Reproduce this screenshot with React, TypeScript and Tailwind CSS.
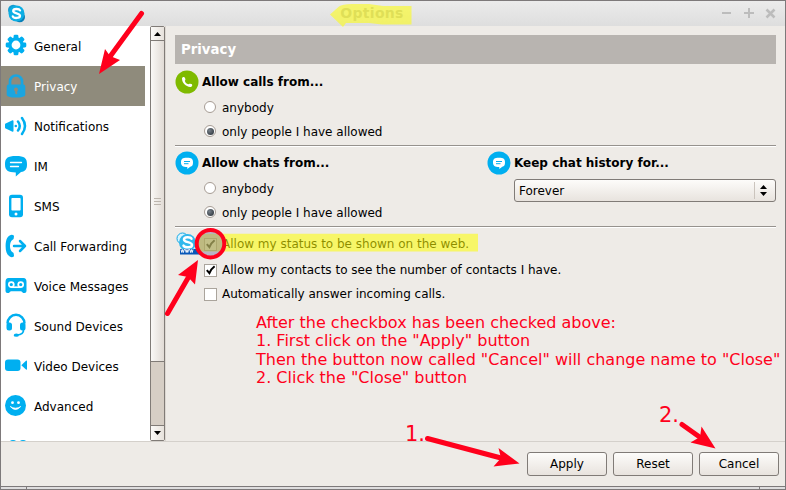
import type { ReactNode } from "react";

const BLUE = "#00aff0";

function GearIcon() {
  return (
    <svg width="22" height="22" viewBox="0 0 22 22">
      <g fill={BLUE}>
        {[0, 45, 90, 135].map((a) => (
          <rect key={a} x="8.6" y="0.7" width="4.8" height="20.6" rx="1.4" transform={`rotate(${a} 11 11)`} />
        ))}
        <circle cx="11" cy="11" r="7.800" />
      </g>
      <circle cx="11" cy="11" r="4.400" fill="#fff" />
    </svg>
  );
}
function LockIcon() {
  return (
    <svg width="22" height="24" viewBox="0 0 22 24">
      <path d="M5 11V7.5a6 6 0 0 1 12 0V11" fill="none" stroke="#1ba5e0" strokeWidth="2.700" />
      <path d="M3.500 10.500h15q1.800 0 1.800 2v8.200q0 2.800-9.300 2.800t-9.300-2.800v-8.200q0-2 1.800-2z" fill="#1ba5e0" />
      <circle cx="11" cy="15.500" r="2" fill="#8f8b7c" />
      <path d="M10.200 16h2v4.500l-2-.7z" fill="#8f8b7c" />
    </svg>
  );
}
function SpeakerIcon() {
  return (
    <svg width="24" height="20" viewBox="0 0 24 20">
      <path d="M1.700 7.400 8.500 4.200q1-.2 1 1v9.600q0 1.200-1 1L1.700 12.600Q1 12.500 1 11.500v-3q0-1 .7-1.100z" fill={BLUE} />
      <circle cx="11.800" cy="10" r="1.300" fill={BLUE} />
      <path d="M14 5.500q3.500 4.500 0 9M18 2q6 8 0 16" fill="none" stroke={BLUE} strokeWidth="2.500" strokeLinecap="round" />
    </svg>
  );
}
function ImIcon() {
  return (
    <svg width="24" height="22" viewBox="0 0 24 22">
      <path d="M12 1C3.500 1 1 3 1 9.300c0 6.200 3 8.200 10.800 8.200V21.500l5.200-4.400c4.500-.8 6-3 6-7.800C23 3 20.500 1 12 1z" fill={BLUE} />
      <path d="M6.500 7.500h11M6.500 11.500h8" stroke="#fff" strokeWidth="1.300" strokeLinecap="round" />
    </svg>
  );
}
function PhoneIcon() {
  return (
    <svg width="16" height="24" viewBox="0 0 16 24">
      <rect x="1" y=".8" width="14" height="22.500" rx="3" fill={BLUE} />
      <rect x="3.400" y="4" width="9.200" height="12.500" rx=".8" fill="#fff" />
      <circle cx="8" cy="20" r="1.500" fill="#fff" />
    </svg>
  );
}
function ForwardIcon() {
  return (
    <svg width="23" height="24" viewBox="0 0 23 24">
      <path d="M7.500.8 9 1q1 .2 1 1.200l-.3 2.300q-.2 1-1.100 1.200-2.600 1.800-2.600 6.300t2.600 6.300q1 .2 1.100 1.200l.3 2.300q0 1-1 1.200l-1.500.2C3.500 22 1.600 18.500 1.600 12S3.500 2 7.500.8z" fill={BLUE} />
      <path d="M10 12h11M16 7l5 5-5 5" fill="none" stroke={BLUE} strokeWidth="2.500" strokeLinecap="round" strokeLinejoin="round" />
    </svg>
  );
}
function VoicemailIcon() {
  return (
    <svg width="24" height="18" viewBox="0 0 24 18">
      <path d="M4.500 1h15Q22.500 1 22.500 5v9q0 2-2 2h-1.300l-2-1.700H6.800l-2 1.700H3.500q-2 0-2-2V5q0-4 3-4z" fill={BLUE} />
      <g fill="none" stroke="#fff" strokeWidth="1.700">
        <circle cx="7.300" cy="7.600" r="2.500" />
        <circle cx="16.700" cy="7.600" r="2.500" />
        <path d="M7.300 10.200h9.400" />
      </g>
    </svg>
  );
}
function HeadsetIcon() {
  return (
    <svg width="22" height="25" viewBox="0 0 22 25">
      <path d="M2.500 10.500a8.500 8.800 0 0 1 17 0" fill="none" stroke={BLUE} strokeWidth="2.500" />
      <rect x="1.500" y="9.500" width="5.500" height="8" rx="2.500" fill={BLUE} />
      <rect x="15" y="9.500" width="5.500" height="8" rx="2.500" fill={BLUE} />
      <path d="M18.500 16.500q.5 5-6.500 5.500" fill="none" stroke={BLUE} strokeWidth="1.700" />
      <ellipse cx="11.300" cy="22.200" rx="2.600" ry="1.600" fill={BLUE} />
    </svg>
  );
}
function VideoIcon() {
  return (
    <svg width="24" height="14" viewBox="0 0 24 14">
      <rect x="1" y="1.500" width="15.500" height="11.500" rx="3" fill={BLUE} />
      <path d="M17.300 7.200 22 2.800q1-.6 1 .5v7.800q0 1.100-1 .5z" fill={BLUE} />
    </svg>
  );
}
function SmileIcon() {
  return (
    <svg width="23" height="23" viewBox="0 0 23 23">
      <circle cx="11.500" cy="11.500" r="10.500" fill={BLUE} />
      <circle cx="8.500" cy="8.700" r="1.400" fill="#fff" />
      <circle cx="14.500" cy="8.700" r="1.400" fill="#fff" />
      <path d="M6.300 12.500q5.200 6 10.400 0-2.200 1.700-5.200 1.700t-5.200-1.700z" fill="#fff" stroke="#fff" strokeWidth=".8" strokeLinejoin="round" />
    </svg>
  );
}
function PeopleIcon() {
  return (
    <svg width="22" height="22" viewBox="0 0 22 22">
      <circle cx="7" cy="6" r="4" fill={BLUE} />
      <circle cx="17" cy="6" r="4" fill={BLUE} />
    </svg>
  );
}

const items: { label: string; icon: ReactNode; selected?: boolean; shift?: string }[] = [
  { label: "General", icon: <GearIcon />, shift: "pb-[2px]" },
  { label: "Privacy", icon: <LockIcon />, selected: true },
  { label: "Notifications", icon: <SpeakerIcon /> },
  { label: "IM", icon: <ImIcon /> },
  { label: "SMS", icon: <PhoneIcon /> },
  { label: "Call Forwarding", icon: <ForwardIcon /> },
  { label: "Voice Messages", icon: <VoicemailIcon /> },
  { label: "Sound Devices", icon: <HeadsetIcon />, shift: "pb-[2px]" },
  { label: "Video Devices", icon: <VideoIcon />, shift: "pb-[2px]" },
  { label: "Advanced", icon: <SmileIcon />, shift: "pb-[1px]" },
];

function Titlebar() {
  return (
    <header className="flex h-[25px] shrink-0 items-start justify-between bg-linear-to-b from-[#ebebeb] to-[#dedede] pl-[6px] pr-[9px]">
      <svg className="mt-[3px]" width="19" height="19" viewBox="0 0 19 19">
        <circle cx="6.200" cy="6" r="5.200" fill="#159bd0" />
        <circle cx="12.800" cy="13" r="5.200" fill="#087fb8" />
        <circle cx="9.500" cy="9.500" r="8" fill="#0caee4" />
        <path d="M13 6.400C12.200 4.600 6.300 4.300 6.200 7c0 3 6.800 1.600 6.800 4.800 0 2.900-6.400 2.700-7.200.6" fill="none" stroke="#fff" strokeWidth="2.300" strokeLinecap="round" />
      </svg>
      <div className="flex flex-1 justify-center pr-[3px] text-[14px] font-bold leading-[24px] tracking-[0.300px] text-[#b0b0b0]">
        Options
      </div>
      <svg className="mt-[5px]" width="55" height="13" viewBox="0 0 55 13" fill="none" stroke="#bcbcbc">
        <path d="M1 7h9M23 7h10M28 2v10" strokeWidth="2" />
        <path d="M45.500 3.500l8 8M53.500 3.500l-8 8" strokeWidth="2.500" />
      </svg>
    </header>
  );
}

function Sidebar() {
  return (
    <nav className="h-[415px] w-[149px] shrink-0 overflow-hidden bg-white">
      {items.map((it) => (
        <div
          key={it.label}
          className={`flex h-10 items-center whitespace-nowrap ${it.selected ? "mr-[5px] bg-[#8f8b7c] text-white" : "text-black"}`}
        >
          <span className={`flex w-[29px] shrink-0 justify-center ${it.shift ?? ""}`}>{it.icon}</span>
          <span className="ml-1 pt-[3px]">{it.label}</span>
        </div>
      ))}
      <div className="flex h-10 pl-[5px] pt-[12px]">
        <PeopleIcon />
      </div>
    </nav>
  );
}

function Scrollbar() {
  return (
    <div className="flex h-[415px] w-[15px] shrink-0 flex-col rounded-[2px] border border-[#807b77] bg-[#d6cec5]">
      <div className="flex h-[14px] shrink-0 items-center justify-center border-b border-[#807b77] bg-linear-to-r from-[#fbfaf8] to-[#e7e2dc]">
        <svg width="7" height="4" viewBox="0 0 7 4"><path d="M0 4 3.500 0 7 4z" /></svg>
      </div>
      <div className="flex h-[321px] shrink-0 flex-col items-center justify-center gap-[2px] border-b border-[#807b77] bg-linear-to-r from-[#faf8f6] to-[#e1dbd5]">
        <i className="h-px w-[7px] bg-[#bcb5ad]" />
        <i className="h-px w-[7px] bg-[#bcb5ad]" />
        <i className="h-px w-[7px] bg-[#bcb5ad]" />
      </div>
      <div className="flex-1" />
      <div className="flex h-[15px] shrink-0 items-center justify-center border-t border-[#807b77] bg-linear-to-r from-[#fbfaf8] to-[#e7e2dc]">
        <svg width="7" height="4" viewBox="0 0 7 4"><path d="M0 0h7L3.500 4z" /></svg>
      </div>
    </div>
  );
}

function Badge({ kind }: { kind: "call" | "chat" }) {
  return (
    <svg className="shrink-0" width="24" height="24" viewBox="0 0 24 24">
      <circle cx="12" cy="12" r="11.500" fill={kind === "call" ? "#7fba00" : BLUE} />
      {kind === "call" ? (
        <path d="M7 8.600c-.1-1.800 2.500-2.400 3-.7l.4 1.300c.2.700-.6 1.200-.5 1.700.5 1.700 1.900 2.900 3.300 3.300.6.100 1-.8 1.800-.5l1.400.4c1.600.6.7 3.200-1.100 3-4.600-.6-8.200-4-8.300-8.500z" fill="#fff" />
      ) : (
        <>
          <path d="M12 6.800c-4.700 0-6 1.400-6 4.600s1.700 4.500 6.300 4.500V18l3-2.300c2-.5 2.700-1.800 2.700-4.300 0-3.200-1.300-4.600-6-4.600z" fill="#fff" />
          <path d="M9 10.500h6M9 12.700h4.500" stroke={BLUE} strokeWidth="1" />
        </>
      )}
    </svg>
  );
}

function Heading({ kind, children }: { kind: "call" | "chat"; children: ReactNode }) {
  return (
    <h2 className="flex h-6 items-center gap-[3px] font-bold">
      <Badge kind={kind} />
      <span>{children}</span>
    </h2>
  );
}

function Radio({ on, children }: { on?: boolean; children: ReactNode }) {
  return (
    <label className="flex h-6 items-center gap-[6px] pl-[29px]">
      <span className="flex size-3 items-center justify-center rounded-full border border-[#a69c94] bg-white">
        {on && <span className="size-[7px] rounded-full bg-radial-[at_35%_35%] from-[#78818a] to-[#22292f]" />}
      </span>
      <span className="pt-[2px]">{children}</span>
    </label>
  );
}

function Check({ on, children }: { on?: boolean; children: ReactNode }) {
  return (
    <label className="flex h-[24px] items-center gap-[5px] pl-[29px]">
      <span className="size-[13px] shrink-0 border border-[#aaa49c] bg-white">
        {on && (
          <svg width="11" height="11" viewBox="0 0 11 11">
            <path d="M1.800 5.200 4.400 8.200Q6 4 9.600 1.300" fill="none" stroke="#000" strokeWidth="2" />
          </svg>
        )}
      </span>
      <span>{children}</span>
    </label>
  );
}

function SkypeWebIcon() {
  return (
    <svg className="absolute left-px top-[4px]" width="24" height="24" viewBox="0 0 24 24">
      <circle cx="6.500" cy="6.500" r="5.500" fill="#d8f4ff" stroke="#12a9e6" />
      <circle cx="15" cy="15" r="6.500" fill="#bcecff" stroke="#12a9e6" />
      <circle cx="11.500" cy="10.500" r="8.500" fill="#32b8ec" />
      <path d="M15.500 6.800C14.500 4.600 8 4.500 8 7.500c0 3.300 8 2 8 5.500 0 3.100-7.300 3-8.500.6" fill="none" stroke="#fff" strokeWidth="2.500" strokeLinecap="round" />
      <rect x="4" y="17" width="20" height="5.500" fill="#0757b8" />
      <path d="M5 17.500l.8 3 .8-3 .8 3 .8-3 1.200 0 .8 3 .8-3 .8 3 .8-3 1.200 0 .8 3 .8-3 .8 3 .8-3" fill="none" stroke="#fff" strokeWidth=".9" />
    </svg>
  );
}

function Rule() {
  return <div className="h-[2px] border-t border-[#96928e] bg-white" />;
}

function PrivacyPane() {
  return (
    <main className="flex-1 border-l border-[#dcd7d1] pl-[9px] pr-[9px] pt-[9px]">
      <h1 className="flex h-[29px] items-center bg-[#b8b4b0] pl-[6px] text-[13.300px] font-bold text-white">Privacy</h1>
      <section className="h-[81px] pt-[6px]">
        <Heading kind="call">Allow calls from...</Heading>
        <div className="pt-px">
          <Radio>anybody</Radio>
          <Radio on>only people I have allowed</Radio>
        </div>
      </section>
      <Rule />
      <section className="flex h-[79px] pt-[4px]">
        <div className="w-[312px]">
          <Heading kind="chat">Allow chats from...</Heading>
          <div className="pt-[1px]">
            <Radio>anybody</Radio>
            <Radio on>only people I have allowed</Radio>
          </div>
        </div>
        <div className="flex-1">
          <Heading kind="chat">Keep chat history for...</Heading>
          <div className="ml-[27px] mt-[4px] flex h-[23px] items-center justify-between rounded-[3px] border border-[#807b77] bg-linear-to-b from-[#fdfcfa] to-[#e8e3de] pl-1">
            <span className="pt-px">Forever</span>
            <span className="flex h-[17px] w-[21px] items-center border-l border-[#cbc4bd] pl-[5px]">
              <svg width="7" height="11" viewBox="0 0 7 11"><path d="M0 4 3.500 0 7 4zM0 7h7L3.500 11z" /></svg>
            </span>
          </div>
        </div>
      </section>
      <Rule />
      <section className="relative pt-[4px]">
        <SkypeWebIcon />
        <Check on>Allow my status to be shown on the web.</Check>
        <div className="pt-[2px]">
          <Check on>Allow my contacts to see the number of contacts I have.</Check>
          <Check>Automatically answer incoming calls.</Check>
        </div>
      </section>
    </main>
  );
}

function Footer() {
  return (
    <footer className="flex h-[45px] shrink-0 justify-end gap-[6px] border-t border-[#d4d0cb] pr-[6px] pt-[10px]">
      {["Apply", "Reset", "Cancel"].map((name) => (
        <button key={name} className="h-6 w-20 rounded-[3px] border border-[#807b77] bg-linear-to-b from-[#fdfcfa] to-[#e8e3de]">
          {name}
        </button>
      ))}
    </footer>
  );
}

const arrows = [
  { line: "M141.500 13.500 109 58", head: "99,74 105,49 110,56 120,60" },
  { line: "M167.500 313.500 188 278", head: "198,260 178,275 188,277 195,284.500" },
  { line: "M427.500 438.500 501 458", head: "519.500,463.500 498.500,448 501,458 493.500,466.500" },
  { line: "M682 424.500 701 438", head: "715.500,448.500 701.500,426.500 700,437 690.500,442.500" },
];

function Annotations() {
  return (
    <>
      <svg className="absolute left-0 top-0" width="786" height="490" viewBox="0 0 786 490">
        <path d="M198 233.700H478V251.500H198z" fill="#ffff00" fillOpacity=".55" />
        <circle cx="210.500" cy="243.700" r="12.500" fill="#7870a0" fillOpacity=".45" />
        <path d="M330 14.500 339 6.500Q342 4 352 4h17l14 2h28.500v18.500H382l-13-1.500h-23l-3 4z" fill="#fbfb20" fillOpacity=".62" />
        <circle cx="210.500" cy="243.700" r="13.800" fill="none" stroke="#ff001c" strokeWidth="4" />
        {arrows.map((a) => (
          <g key={a.head}>
            <path d={a.line} stroke="#ff001c" strokeWidth="5" strokeLinecap="round" />
            <polygon points={a.head} fill="#ff001c" />
          </g>
        ))}
      </svg>
      <div className="absolute left-[256px] top-[314px] whitespace-nowrap text-[16px] leading-[18.300px] text-[#ff001c]">
        <p>After the checkbox has been checked above:</p>
        <p>1. First click on the "Apply" button</p>
        <p>Then the button now called "Cancel" will change name to "Close"</p>
        <p>2. Click the "Close" button</p>
      </div>
      <span className="absolute left-[405px] top-[422px] text-[21px] leading-[25px] text-[#ff001c]">1.</span>
      <span className="absolute left-[659px] top-[403px] text-[21px] leading-[25px] text-[#ff001c]">2.</span>
    </>
  );
}

export default function App() {
  return (
    <div className="relative flex h-[490px] w-[786px] flex-col overflow-hidden border border-[#7d797a] bg-[#eeebe7] font-['DejaVu_Sans',sans-serif] text-[12px] leading-[15px] text-black">
      <Titlebar />
      <div className="flex h-[415px] shrink-0">
        <Sidebar />
        <Scrollbar />
        <PrivacyPane />
      </div>
      <Footer />
      <div className="flex h-[3px] shrink-0 border-t border-[#7d797a] bg-[#deddde]">
        <i className="w-[26px] border-r border-[#7d797a]" />
        <i className="flex-1" />
        <i className="w-[26px] border-l border-[#7d797a]" />
      </div>
      <div className="absolute -left-px -top-px h-[490px] w-[786px]">
        <Annotations />
      </div>
    </div>
  );
}
